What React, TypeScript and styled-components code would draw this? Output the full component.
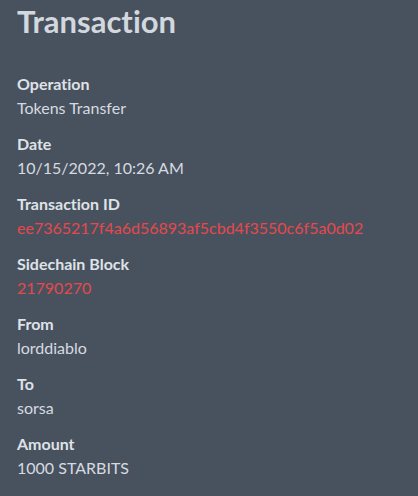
import { createGlobalStyle } from "styled-components";
import styled from "styled-components";

const GlobalStyle = createGlobalStyle`
  html, body {
    margin: 0;
    padding: 0;
    background: #48525e;
  }
  body {
    font-family: Lato, "Open Sans", sans-serif;
    font-variant-ligatures: none;
    color: #d6dae0;
  }
`;

interface Field {
  label: string;
  value: string;
  accent?: boolean;
}

const fields: Field[] = [
  { label: "Operation", value: "Tokens Transfer" },
  { label: "Date", value: "10/15/2022, 10:26 AM" },
  { label: "Transaction ID", value: "ee7365217f4a6d56893af5cbd4f3550c6f5a0d02", accent: true },
  { label: "Sidechain Block", value: "21790270", accent: true },
  { label: "From", value: "lorddiablo" },
  { label: "To", value: "sorsa" },
  { label: "Amount", value: "1000 STARBITS" },
];

const App = () => (
  <>
    <GlobalStyle />
    <Wrapper>
      <Title>Transaction</Title>
      <List>
        {fields.map((f) => (
          <Item key={f.label}>
            <Label>{f.label}</Label>
            <Value $accent={f.accent}>{f.value}</Value>
          </Item>
        ))}
      </List>
    </Wrapper>
  </>
);

const Wrapper = styled.main`
  width: 418px;
  height: 496px;
  box-sizing: border-box;
  padding: 0 17px;
  overflow: hidden;
`;

const Title = styled.h1`
  margin: 0;
  padding-top: 1px;
  font-size: 31px;
  line-height: 40px;
  font-weight: 700;
  color: #d3d7de;
`;

const List = styled.dl`
  margin: 32px 0 0;
  display: flex;
  flex-direction: column;
  gap: 15px;
`;

const Item = styled.div`
  display: flex;
  flex-direction: column;
  gap: 3px;
`;

const Label = styled.dt`
  font-size: 16px;
  line-height: 21px;
  font-weight: 700;
  color: #dfe2e7;
`;

const Value = styled.dd<{ $accent?: boolean }>`
  margin: 0;
  font-size: 16px;
  line-height: 21px;
  color: ${(p) => (p.$accent ? "#e5484d" : "#d6dae0")};
`;

export default App;
